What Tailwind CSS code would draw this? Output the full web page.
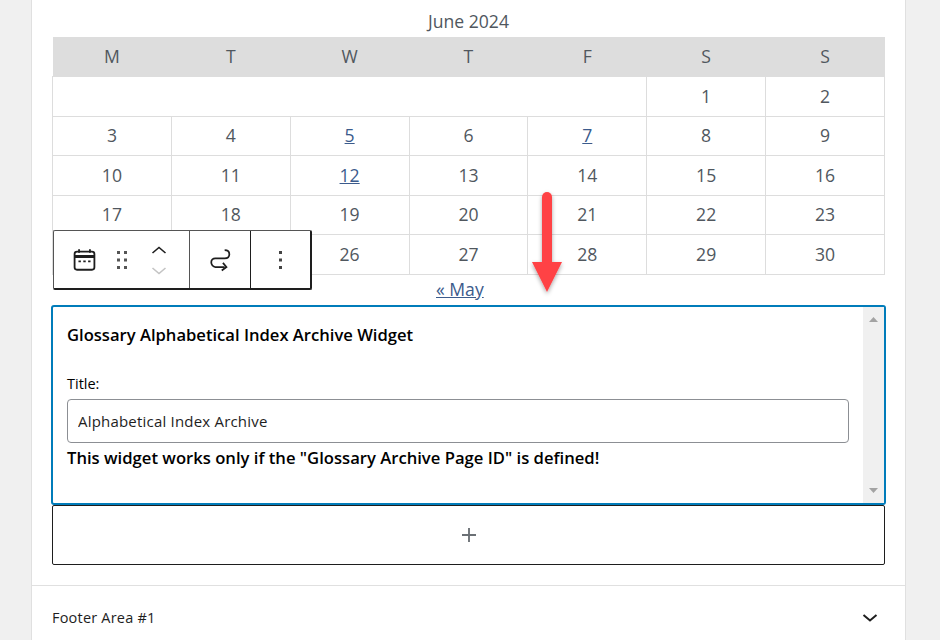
<!DOCTYPE html>
<html lang="en">
<head>
  <meta charset="UTF-8" />
  <title>Widget editor</title>
  <script src="https://cdn.jsdelivr.net/npm/@tailwindcss/browser@4"></script>
</head>
<body class="bg-[#f0f0f0] h-[640px] overflow-hidden font-['Open_Sans',sans-serif]">
  <div class="relative ml-[31px] w-[875px] h-[640px] bg-white border-x border-[#e0e0e0] overflow-hidden">
    <!-- Calendar -->
    <div class="mx-5 pt-[8px] text-[#50575e]">
      <div class="h-[29px] leading-[27px] text-center text-[17.6px]">June 2024</div>
      <table class="w-[833px] table-fixed border-collapse text-[17.6px] text-center">
        <thead>
          <tr class="h-[39.5px] bg-[#dddddd]">
            <th class="font-normal">M</th><th class="font-normal">T</th><th class="font-normal">W</th><th class="font-normal">T</th><th class="font-normal">F</th><th class="font-normal">S</th><th class="font-normal">S</th>
          </tr>
        </thead>
        <tbody>
          <tr class="h-[39.5px]">
            <td colspan="5" class="border border-[#dddddd]"></td>
            <td class="border border-[#dddddd]">1</td><td class="border border-[#dddddd]">2</td>
          </tr>
          <tr class="h-[39.5px] [&>td]:pb-[2px]">
            <td class="border border-[#dddddd]">3</td><td class="border border-[#dddddd]">4</td>
            <td class="border border-[#dddddd]"><a href="#" class="underline text-[#3b5b8c]">5</a></td>
            <td class="border border-[#dddddd]">6</td>
            <td class="border border-[#dddddd]"><a href="#" class="underline text-[#3b5b8c]">7</a></td>
            <td class="border border-[#dddddd]">8</td><td class="border border-[#dddddd]">9</td>
          </tr>
          <tr class="h-[39.5px]">
            <td class="border border-[#dddddd]">10</td><td class="border border-[#dddddd]">11</td>
            <td class="border border-[#dddddd]"><a href="#" class="underline text-[#3b5b8c]">12</a></td>
            <td class="border border-[#dddddd]">13</td><td class="border border-[#dddddd]">14</td><td class="border border-[#dddddd]">15</td><td class="border border-[#dddddd]">16</td>
          </tr>
          <tr class="h-[39.5px] [&>td]:pb-[2px]">
            <td class="border border-[#dddddd]">17</td><td class="border border-[#dddddd]">18</td><td class="border border-[#dddddd]">19</td><td class="border border-[#dddddd]">20</td><td class="border border-[#dddddd]">21</td><td class="border border-[#dddddd]">22</td><td class="border border-[#dddddd]">23</td>
          </tr>
          <tr class="h-[39.5px]">
            <td class="border border-[#dddddd]">24</td><td class="border border-[#dddddd]">25</td><td class="border border-[#dddddd]">26</td><td class="border border-[#dddddd]">27</td><td class="border border-[#dddddd]">28</td><td class="border border-[#dddddd]">29</td><td class="border border-[#dddddd]">30</td>
          </tr>
        </tbody>
      </table>
      <div class="h-[30px] pl-[384px] text-[17.6px] leading-[29px]"><a href="#" class="underline text-[#3b5b8c]">« May</a></div>
    </div>

    <!-- Selected widget block -->
    <div class="relative ml-[19px] w-[835px] h-[200px] border-2 border-[#007cba] rounded-[3px] flex text-black">
      <div class="flex-1 pl-[14px]">
        <h3 class="mt-[15px] text-[16.6px] leading-[25px] font-semibold">Glossary Alphabetical Index Archive Widget</h3>
        <label class="block mt-[27px] text-[14.5px] leading-[20px]">Title:</label>
        <input type="text" value="Alphabetical Index Archive" class="block mt-[5px] w-[782px] h-[44px] px-[10px] text-[15px] text-[#1e1e1e] border border-[#8c8f94] rounded-[4px] tracking-[0.2px]" />
        <p class="mt-[3px] text-[16.65px] leading-[24px] font-semibold">This widget works only if the "Glossary Archive Page ID" is defined!</p>
      </div>
      <div class="w-[21px] shrink-0 bg-[#f0f0f0] flex flex-col justify-between items-center py-[10px]">
        <svg width="9" height="5" viewBox="0 0 9 5"><path d="M4.500 0L9 5H0z" fill="#a3a3a3"/></svg>
        <svg width="9" height="5" viewBox="0 0 9 5"><path d="M4.500 5L9 0H0z" fill="#a3a3a3"/></svg>
      </div>
    </div>

    <!-- Block appender -->
    <div class="mx-5 w-[833px] h-[60px] border border-[#1e1e1e] rounded-[2px] flex items-center justify-center">
      <svg width="28" height="28" viewBox="0 0 24 24" fill="#6b7075"><path d="M18 11.200h-5.200V6h-1.600v5.200H6v1.600h5.200V18h1.600v-5.200H18z"/></svg>
    </div>

    <!-- Footer area -->
    <div class="mt-5 border-t border-[#e0e0e0] h-[55px] pt-[10px] pl-5 pr-[23px] flex items-center justify-between">
      <span class="text-[14.5px] font-medium text-[#1e1e1e] tracking-[0.2px]">Footer Area #1</span>
      <svg width="24" height="24" viewBox="0 0 24 24" fill="none" stroke="#1e1e1e" stroke-width="2"><path d="M5.500 9l6.500 5.500L18.500 9"/></svg>
    </div>

    <!-- Floating block toolbar -->
    <div class="absolute left-[21px] top-[230px] h-[60px] flex bg-white border border-[#555555] border-r-[#1e1e1e] border-b-[#1e1e1e] border-r-2 border-b-2 rounded-[2px]">
      <div class="relative w-[136px] border-r border-[#555555]">
        <svg class="absolute left-[16px] top-[14px]" width="29" height="29" viewBox="0 0 24 24" fill="none" stroke="#1e1e1e"><rect x="3.800" y="5.500" width="16.400" height="15" rx="2" stroke-width="1.500"/><path d="M3.800 9.500h16.400" stroke-width="2.500"/><path d="M7.500 3.500v3M16.500 3.500v3" stroke-width="1.500"/><path d="M7 13.500h2M11 13.500h2M15 13.500h2" stroke-width="1.500"/></svg>
        <svg class="absolute left-[63px] top-[20px]" width="10" height="18" viewBox="0 0 10 18" fill="#555555"><path d="M0 0h3v3H0zM7 0h3v3H7zM0 7.500h3v3H0zM7 7.500h3v3H7zM0 15h3v3H0zM7 15h3v3H7z"/></svg>
        <svg class="absolute left-[97px] top-[15px]" width="16" height="8" viewBox="0 0 16 8" fill="none" stroke="#1e1e1e" stroke-width="1.600"><path d="M1.500 7l6.500-5.500L14.500 7"/></svg>
        <svg class="absolute left-[97px] top-[36px]" width="16" height="8" viewBox="0 0 16 8" fill="none" stroke="#c4c4c4" stroke-width="1.600"><path d="M1.500 1L8 6.500 14.500 1"/></svg>
      </div>
      <div class="w-[61px] flex items-center justify-center border-r border-[#1e1e1e]">
        <svg width="28" height="28" viewBox="0 0 24 24" fill="none" stroke="#1e1e1e" stroke-width="1.500"><path d="M16 3.500c2.500 0 4 1.500 4 3.500s-1.500 3.500-4 3.500H8c-2 0-3.500 1.500-3.500 3.500s1.500 4 3.500 4h8"/><path d="M13.500 21L17.500 18 14.500 14.500"/></svg>
      </div>
      <div class="w-[59px] flex items-center justify-center">
        <svg width="3" height="18" viewBox="0 0 3 18" fill="#444444"><path d="M0 0h3v3H0zM0 7.500h3v3H0zM0 15h3v3H0z"/></svg>
      </div>
    </div>

    <!-- Annotation arrow -->
    <svg class="absolute left-[496px] top-[188px]" width="38" height="112" viewBox="0 0 38 112">
      <defs><filter id="s" x="-30%" y="-10%" width="160%" height="125%"><feDropShadow dx="0" dy="2" stdDeviation="2" flood-color="#000" flood-opacity="0.35"/></filter></defs>
      <g filter="url(#s)" fill="#ff4245"><path d="M14 9a5 5 0 0 1 10 0V76H14z"/><path d="M4 74h30L19 104z"/></g>
    </svg>
  </div>
</body>
</html>
